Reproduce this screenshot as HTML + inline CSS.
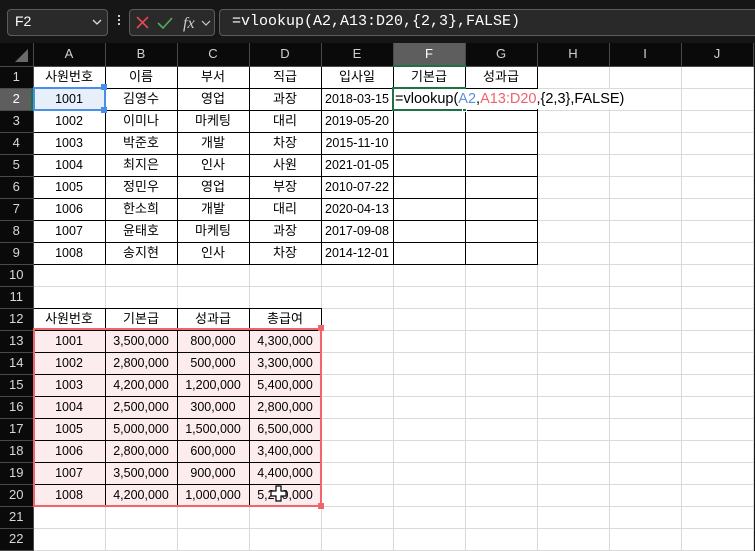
<!DOCTYPE html>
<html><head><meta charset="utf-8">
<style>
*{margin:0;padding:0;box-sizing:border-box}
body{width:755px;height:551px;overflow:hidden;background:#161616;position:relative;font-family:"Liberation Sans","Noto Sans CJK KR",sans-serif}
.abs{position:absolute}
table{position:absolute;left:0;top:43px;border-collapse:collapse;table-layout:fixed;background:#fff}
td{height:22px;border:1px solid #dadada;font-size:12.5px;text-align:center;color:#000;white-space:nowrap;overflow:visible;padding:0;line-height:20px}
tr.h td{height:23px;background:#0a0a0a;color:#d0d0d0;border:1px solid #4a4a4a;border-top:none;font-size:13px}
td.rh{background:#0a0a0a;color:#d8d8d8;border:1px solid #4a4a4a;border-left:none;font-size:13px;text-align:center}
td.b{border:1px solid #000}
td.bb{border-bottom:1px solid #000}
td.p{background:#fdeced}
td.sel{background:#5e5e5e;color:#fff}
td.ko{font-size:13px}
</style></head><body>
<!-- toolbar -->
<div class="abs" style="left:7px;top:9px;width:101px;height:27px;background:#2a2a2a;border:1px solid #5c5c5c;border-radius:4px"></div>
<div class="abs" style="left:15px;top:13px;color:#fff;font-size:14px">F2</div>
<svg class="abs" style="left:91px;top:17px" width="12" height="10"><path d="M2 3 L6 7 L10 3" stroke="#ddd" stroke-width="1.3" fill="none"/></svg>
<div class="abs" style="left:118px;top:15px;width:2px;height:2px;background:#ccc;box-shadow:0 4px 0 #ccc,0 8px 0 #ccc"></div>
<div class="abs" style="left:129px;top:9px;width:86px;height:27px;background:#2a2a2a;border:1px solid #5c5c5c;border-radius:4px"></div>
<svg class="abs" style="left:134px;top:14px" width="80" height="18">
<path d="M3 3 L14 14 M14 3 L3 14" stroke="#e5484d" stroke-width="1.6" fill="none"/>
<path d="M24 9 L29 14 L38 4" stroke="#4fae5b" stroke-width="1.6" fill="none"/>
<text x="49" y="14" font-family="Liberation Serif,serif" font-style="italic" font-size="16" fill="#ccc">fx</text>
<path d="M68 7 L72 11 L76 7" stroke="#ccc" stroke-width="1.2" fill="none"/>
</svg>
<div class="abs" style="left:219px;top:9px;width:540px;height:27px;background:#292929;border:1px solid #5c5c5c;border-radius:4px"></div>
<div class="abs" style="left:232px;top:13px;color:#fff;font-family:'Liberation Mono',monospace;font-size:15px">=vlookup(A2,A13:D20,{2,3},FALSE)</div>

<table>
<colgroup><col style="width:33px"><col style="width:72px"><col style="width:72px"><col style="width:72px"><col style="width:72px"><col style="width:72px"><col style="width:72px"><col style="width:72px"><col style="width:72px"><col style="width:72px"><col style="width:72px"></colgroup>
<tr class="h"><td style="border-left:none"></td><td>A</td><td>B</td><td>C</td><td>D</td><td>E</td><td style="background:#5e5e5e;color:#fff;border-bottom:2px solid #1e7145">F</td><td>G</td><td>H</td><td>I</td><td>J</td></tr>
<tr><td class="rh">1</td><td class="b ko">사원번호</td><td class="b ko">이름</td><td class="b ko">부서</td><td class="b ko">직급</td><td class="b ko">입사일</td><td class="b ko">기본급</td><td class="b ko">성과급</td><td></td><td></td><td></td></tr>
<tr><td class="rh sel">2</td><td class="b" style="background:#e6effa">1001</td><td class="b ko">김영수</td><td class="b ko">영업</td><td class="b ko">과장</td><td class="b">2018-03-15</td><td class="b"></td><td class="b"></td><td></td><td></td><td></td></tr>
<tr><td class="rh">3</td><td class="b">1002</td><td class="b ko">이미나</td><td class="b ko">마케팅</td><td class="b ko">대리</td><td class="b">2019-05-20</td><td class="b"></td><td class="b"></td><td></td><td></td><td></td></tr>
<tr><td class="rh">4</td><td class="b">1003</td><td class="b ko">박준호</td><td class="b ko">개발</td><td class="b ko">차장</td><td class="b">2015-11-10</td><td class="b"></td><td class="b"></td><td></td><td></td><td></td></tr>
<tr><td class="rh">5</td><td class="b">1004</td><td class="b ko">최지은</td><td class="b ko">인사</td><td class="b ko">사원</td><td class="b">2021-01-05</td><td class="b"></td><td class="b"></td><td></td><td></td><td></td></tr>
<tr><td class="rh">6</td><td class="b">1005</td><td class="b ko">정민우</td><td class="b ko">영업</td><td class="b ko">부장</td><td class="b">2010-07-22</td><td class="b"></td><td class="b"></td><td></td><td></td><td></td></tr>
<tr><td class="rh">7</td><td class="b">1006</td><td class="b ko">한소희</td><td class="b ko">개발</td><td class="b ko">대리</td><td class="b">2020-04-13</td><td class="b"></td><td class="b"></td><td></td><td></td><td></td></tr>
<tr><td class="rh">8</td><td class="b">1007</td><td class="b ko">윤태호</td><td class="b ko">마케팅</td><td class="b ko">과장</td><td class="b">2017-09-08</td><td class="b"></td><td class="b"></td><td></td><td></td><td></td></tr>
<tr><td class="rh">9</td><td class="b">1008</td><td class="b ko">송지현</td><td class="b ko">인사</td><td class="b ko">차장</td><td class="b">2014-12-01</td><td class="b"></td><td class="b"></td><td></td><td></td><td></td></tr>
<tr><td class="rh">10</td><td></td><td></td><td></td><td></td><td></td><td></td><td></td><td></td><td></td><td></td></tr>
<tr><td class="rh">11</td><td class="bb"></td><td class="bb"></td><td class="bb"></td><td class="bb"></td><td></td><td></td><td></td><td></td><td></td><td></td></tr>
<tr><td class="rh">12</td><td class="b ko">사원번호</td><td class="b ko">기본급</td><td class="b ko">성과급</td><td class="b ko">총급여</td><td></td><td></td><td></td><td></td><td></td><td></td></tr>
<tr><td class="rh">13</td><td class="b p">1001</td><td class="b p">3,500,000</td><td class="b p">800,000</td><td class="b p">4,300,000</td><td></td><td></td><td></td><td></td><td></td><td></td></tr>
<tr><td class="rh">14</td><td class="b p">1002</td><td class="b p">2,800,000</td><td class="b p">500,000</td><td class="b p">3,300,000</td><td></td><td></td><td></td><td></td><td></td><td></td></tr>
<tr><td class="rh">15</td><td class="b p">1003</td><td class="b p">4,200,000</td><td class="b p">1,200,000</td><td class="b p">5,400,000</td><td></td><td></td><td></td><td></td><td></td><td></td></tr>
<tr><td class="rh">16</td><td class="b p">1004</td><td class="b p">2,500,000</td><td class="b p">300,000</td><td class="b p">2,800,000</td><td></td><td></td><td></td><td></td><td></td><td></td></tr>
<tr><td class="rh">17</td><td class="b p">1005</td><td class="b p">5,000,000</td><td class="b p">1,500,000</td><td class="b p">6,500,000</td><td></td><td></td><td></td><td></td><td></td><td></td></tr>
<tr><td class="rh">18</td><td class="b p">1006</td><td class="b p">2,800,000</td><td class="b p">600,000</td><td class="b p">3,400,000</td><td></td><td></td><td></td><td></td><td></td><td></td></tr>
<tr><td class="rh">19</td><td class="b p">1007</td><td class="b p">3,500,000</td><td class="b p">900,000</td><td class="b p">4,400,000</td><td></td><td></td><td></td><td></td><td></td><td></td></tr>
<tr><td class="rh">20</td><td class="b p">1008</td><td class="b p">4,200,000</td><td class="b p">1,000,000</td><td class="b p">5,200,000</td><td></td><td></td><td></td><td></td><td></td><td></td></tr>
<tr><td class="rh">21</td><td></td><td></td><td></td><td></td><td></td><td></td><td></td><td></td><td></td><td></td></tr>
<tr><td class="rh">22</td><td></td><td></td><td></td><td></td><td></td><td></td><td></td><td></td><td></td><td></td></tr>
</table>
<!-- corner triangle -->
<svg class="abs" style="left:0;top:43px" width="33" height="23"><path d="M28 6 L28 19 L15 19 Z" fill="#6a6a6a"/></svg>
<!-- row 2 header green edge -->
<div class="abs" style="left:31px;top:88px;width:2px;height:22px;background:#1e7145"></div>
<!-- A2 blue range -->
<div class="abs" style="left:33px;top:87px;width:73px;height:24px;border:2px solid #4a8fe7"></div>
<div class="abs" style="left:101px;top:84px;width:6px;height:6px;background:#4a8fe7"></div>
<div class="abs" style="left:101px;top:107px;width:6px;height:6px;background:#4a8fe7"></div>
<!-- pink range -->
<div class="abs" style="left:33px;top:328px;width:289px;height:179px;border:2px solid #f0646c"></div>
<div class="abs" style="left:318px;top:325px;width:6px;height:6px;background:#f0646c"></div>
<div class="abs" style="left:318px;top:503px;width:6px;height:6px;background:#f0646c"></div>
<!-- F2 selection + formula -->
<div class="abs" style="left:392px;top:87px;width:74px;height:24px;border:2px solid #1e7145"></div>
<div class="abs" style="left:462px;top:107px;width:5px;height:5px;background:#1e7145;border:1px solid #fff"></div>
<div class="abs" style="left:395px;top:89px;background:#fff;font-size:14.5px;color:#000;line-height:20px;padding-right:2px">=vlookup(<span style="color:#5b8fe0">A2</span>,<span style="color:#f0626e">A13:D20</span>,{2,3},FALSE)</div>
<!-- cursor -->
<svg class="abs" style="left:270px;top:485px" width="18" height="18"><path d="M6 1 H11 V6 H16 V11 H11 V16 H6 V11 H1 V6 H6 Z" fill="#fff" stroke="#000" stroke-width="1.2"/></svg>
</body></html>
